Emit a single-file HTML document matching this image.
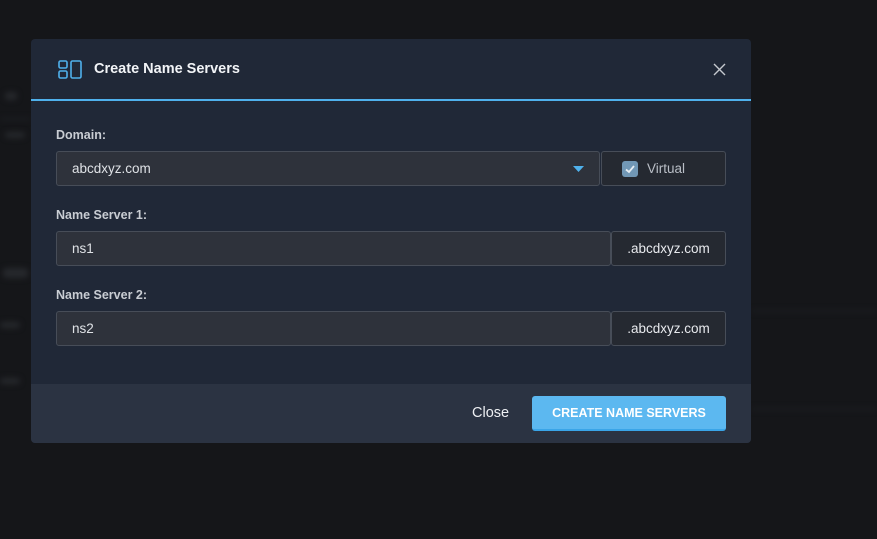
<!DOCTYPE html>
<html><head><style>
*{box-sizing:border-box;margin:0;padding:0}
body{width:877px;height:539px;background:#151619;font-family:"Liberation Sans",sans-serif;position:relative;overflow:hidden;color:#e6e8ec}
.bg{position:absolute;background:#26282c;filter:blur(3px);border-radius:3px}
.modal{position:absolute;left:31px;top:39px;width:720px;height:404px;background:#202837;border-radius:4px;overflow:hidden}
.hdr{position:absolute;left:0;top:0;width:720px;height:62px;border-bottom:2px solid #4fb1ec}
.title{position:absolute;left:63px;top:22px;font-size:14.5px;font-weight:bold;color:#f2f4f7}
.lbl{position:absolute;left:25px;font-size:12.5px;font-weight:bold;color:#c9cdd3}
.inp{position:absolute;height:35px;background:#2e323b;border:1px solid #474d58;border-radius:3px;font-size:13.5px;color:#dfe2e6;padding-left:15px;line-height:33px}
.suf{position:absolute;height:35px;background:#252931;border:1px solid #474d58;border-radius:3px;font-size:13.5px;color:#e8eaee;line-height:33px;text-align:center}
.ftr{position:absolute;left:0;top:345px;width:720px;height:59px;background:#2b3342}
.btn{position:absolute;left:501px;top:12px;width:194px;height:35px;background:#5cb8f0;border-bottom:2px solid #3aa5e8;border-radius:3px;color:#fff;font-size:12.5px;font-weight:bold;text-align:center;line-height:35px}
</style></head><body>
<div class="bg" style="left:5px;top:92px;width:12px;height:8px"></div>
<div class="bg" style="left:5px;top:132px;width:20px;height:6px"></div>
<div class="bg" style="left:0;top:118px;width:31px;height:2px;background:#1f2125"></div>
<div class="bg" style="left:3px;top:268px;width:25px;height:10px"></div>
<div class="bg" style="left:0;top:322px;width:20px;height:6px"></div>
<div class="bg" style="left:0;top:378px;width:20px;height:6px"></div>
<div class="bg" style="left:751px;top:310px;width:126px;height:2px;background:#1e2024"></div>
<div class="bg" style="left:751px;top:408px;width:126px;height:2px;background:#1e2024"></div>
<div class="modal">
 <div class="hdr">
  <svg style="position:absolute;left:27px;top:21px" width="24" height="19" viewBox="0 0 24 19" fill="none" stroke="#4fb1ec" stroke-width="1.6"><rect x="1" y="1" width="8" height="7" rx="1.5"/><rect x="1" y="11" width="8" height="7" rx="1.5"/><rect x="13" y="1" width="10" height="17" rx="1.5"/></svg>
  <div class="title">Create Name Servers</div>
  <svg style="position:absolute;left:682px;top:24px" width="13" height="13" viewBox="0 0 13 13" stroke="#c5c9cf" stroke-width="1.4"><path d="M1 1L12 12M12 1L1 12"/></svg>
 </div>
 <div class="lbl" style="top:89px">Domain:</div>
 <div class="inp" style="left:25px;top:112px;width:544px">abcdxyz.com
  <svg style="position:absolute;right:15px;top:14px" width="11" height="6"><path d="M0 0H11L5.5 6Z" fill="#4fb1ec"/></svg></div>
 <div class="suf" style="left:570px;top:112px;width:125px;text-align:left;padding-left:45px;color:#b9bec6">Virtual
  <div style="position:absolute;left:20px;top:9px;width:16px;height:16px;background:#7197b5;border-radius:3px"><svg style="display:block" width="16" height="16"><path d="M4 8.5L7 11L12 5" stroke="#e6edf3" stroke-width="1.8" fill="none"/></svg></div></div>
 <div class="lbl" style="top:169px">Name Server 1:</div>
 <div class="inp" style="left:25px;top:192px;width:555px">ns1</div>
 <div class="suf" style="left:580px;top:192px;width:115px">.abcdxyz.com</div>
 <div class="lbl" style="top:249px">Name Server 2:</div>
 <div class="inp" style="left:25px;top:272px;width:555px">ns2</div>
 <div class="suf" style="left:580px;top:272px;width:115px">.abcdxyz.com</div>
 <div class="ftr">
  <div style="position:absolute;left:441px;top:21px;font-size:14.5px;color:#eef0f3">Close</div>
  <div class="btn">CREATE NAME SERVERS</div>
 </div>
</div>
</body></html>
